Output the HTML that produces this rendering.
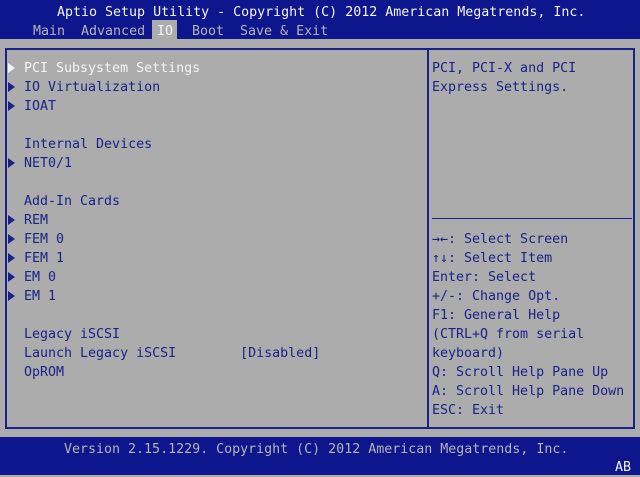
<!DOCTYPE html>
<html><head><meta charset="utf-8"><style>
body{margin:0;width:640px;height:475px;background:#acacac;position:relative;overflow:hidden;font-family:"DejaVu Sans Mono","Liberation Mono",monospace;font-size:13.3px;}
.t{position:absolute;white-space:pre;line-height:19px;color:#1a2288;margin-top:1px;}
.w{color:#f4f4f4;}
.g{color:#b4b4b4;}
.bar{position:absolute;left:0;width:640px;background:#0d168c;}
.ln{position:absolute;background:#1a2288;}
.ar{position:absolute;width:0;height:0;border-top:5px solid transparent;border-bottom:5px solid transparent;border-left:7px solid #1a2288;margin-top:1px;}
</style></head><body>
<div class="bar" style="top:0;height:39px"></div>
<div style="position:absolute;left:152px;top:20px;width:25px;height:19px;background:#acacac"></div>
<div class="t w" style="left:57px;top:2px">Aptio Setup Utility - Copyright (C) 2012 American Megatrends, Inc.</div>
<div class="t g" style="left:33px;top:21px">Main  Advanced</div>
<div class="t w" style="left:157px;top:21px">IO</div>
<div class="t g" style="left:192px;top:21px">Boot  Save &amp; Exit</div>

<div class="ln" style="left:5px;top:48px;width:630px;height:2px"></div>
<div class="ln" style="left:5px;top:48px;width:2px;height:381px"></div>
<div class="ln" style="left:633px;top:48px;width:2px;height:381px"></div>
<div class="ln" style="left:5px;top:427px;width:630px;height:2px"></div>
<div class="ln" style="left:427px;top:48px;width:2px;height:381px"></div>
<div class="ln" style="left:432px;top:218px;width:200px;height:1px"></div>

<div class="ar" style="left:8px;top:62px;border-left-color:#f4f4f4"></div>
<div class="t w" style="left:24px;top:58px">PCI Subsystem Settings</div>
<div class="ar" style="left:8px;top:81px"></div><div class="t" style="left:24px;top:77px">IO Virtualization</div>
<div class="ar" style="left:8px;top:100px"></div><div class="t" style="left:24px;top:96px">IOAT</div>
<div class="t" style="left:24px;top:134px">Internal Devices</div>
<div class="ar" style="left:8px;top:157px"></div><div class="t" style="left:24px;top:153px">NET0/1</div>
<div class="t" style="left:24px;top:191px">Add-In Cards</div>
<div class="ar" style="left:8px;top:214px"></div><div class="t" style="left:24px;top:210px">REM</div>
<div class="ar" style="left:8px;top:233px"></div><div class="t" style="left:24px;top:229px">FEM 0</div>
<div class="ar" style="left:8px;top:252px"></div><div class="t" style="left:24px;top:248px">FEM 1</div>
<div class="ar" style="left:8px;top:271px"></div><div class="t" style="left:24px;top:267px">EM 0</div>
<div class="ar" style="left:8px;top:290px"></div><div class="t" style="left:24px;top:286px">EM 1</div>
<div class="t" style="left:24px;top:324px">Legacy iSCSI</div>
<div class="t" style="left:24px;top:343px">Launch Legacy iSCSI        [Disabled]</div>
<div class="t" style="left:24px;top:362px">OpROM</div>

<div class="t" style="left:432px;top:58px">PCI, PCI-X and PCI
Express Settings.</div>
<div class="t" style="left:432px;top:229px">→←: Select Screen
↑↓: Select Item
Enter: Select
+/-: Change Opt.
F1: General Help
(CTRL+Q from serial
keyboard)
Q: Scroll Help Pane Up
A: Scroll Help Pane Down
ESC: Exit</div>

<div class="bar" style="top:437px;height:38px"></div>
<div class="t g" style="left:64px;top:439px">Version 2.15.1229. Copyright (C) 2012 American Megatrends, Inc.</div>
<div class="t w" style="left:615px;top:457px">AB</div>
</body></html>
